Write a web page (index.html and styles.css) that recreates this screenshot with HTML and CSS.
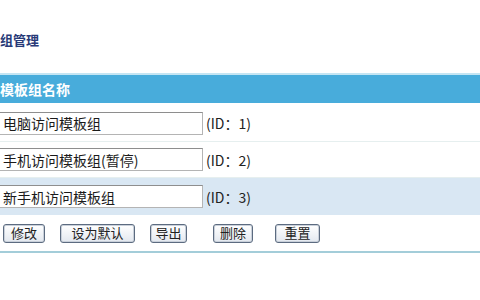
FILE: index.html
```html
<!DOCTYPE html>
<html>
<head>
<meta charset="utf-8">
<link rel="stylesheet" href="styles.css">
</head>
<body>
<div class="page">
  <div class="title">组管理</div>
  <div class="table">
    <div class="head">模板组名称</div>
    <div class="row r1">
      <input class="name" type="text" value="电脑访问模板组">
      <span class="id">(ID：1)</span>
    </div>
    <div class="row r2">
      <input class="name" type="text" value="手机访问模板组(暂停)">
      <span class="id">(ID：2)</span>
    </div>
    <div class="row r3">
      <input class="name" type="text" value="新手机访问模板组">
      <span class="id">(ID：3)</span>
    </div>
    <div class="actions">
      <button class="btn b1">修改</button>
      <button class="btn b2">设为默认</button>
      <button class="btn b3">导出</button>
      <button class="btn b4">删除</button>
      <button class="btn b5">重置</button>
    </div>
  </div>
</div>
</body>
</html>
```
FILE: styles.css
```css
html, body {
  margin: 0;
  padding: 0;
  background: #ffffff;
}
.page {
  width: 480px;
  height: 300px;
  overflow: hidden;
  font-family: "Noto Sans CJK SC", "Noto Sans", sans-serif;
  font-size: 14px;
  color: #222;
}
.title {
  padding-top: 32px;
  height: 73px;
  box-sizing: border-box;
  font-weight: bold;
  font-size: 13px;
  line-height: 16px;
  color: #283a78;
}
.head {
  border-top: 2px solid #c4e5f3;
  height: 28px;
  background: #48acdb;
  color: #ffffff;
  font-weight: bold;
  font-size: 14px;
  line-height: 28px;
}
.row {
  display: flex;
  align-items: center;
  box-sizing: border-box;
  border-bottom: 1px solid #e6efef;
}
.r1 { height: 39px; padding-top: 2px; }
.r2 { height: 36px; }
.r3 { height: 37px; background: #d9e7f3; border-bottom: none; }
.name {
  margin: 0 0 0 -2px;
  width: 205px;
  height: 23px;
  box-sizing: border-box;
  border: 1px solid #b4b4b4;
  border-top-color: #8e8e8e;
  background: #ffffff;
  padding: 0 0 0 4px;
  font-family: "Noto Sans CJK SC", "Noto Sans", sans-serif;
  font-size: 14px;
  color: #1a1a1a;
}
.id {
  margin-left: 3px;
  font-size: 14px;
  color: #222;
}
.actions {
  height: 38px;
  box-sizing: border-box;
  border-bottom: 2px solid #a3cdd9;
  display: flex;
  align-items: center;
  padding-left: 3px;
}
.btn {
  height: 19px;
  padding: 0;
  margin: 0;
  box-sizing: border-box;
  border: 1px solid #5c6b80;
  border-radius: 3px;
  box-shadow: inset 0 0 0 1px #c9d0da;
  background: linear-gradient(#ffffff, #e3e8ef);
  font-family: "Noto Sans CJK SC", "Noto Sans", sans-serif;
  font-size: 13px;
  line-height: 16px;
  color: #222;
}
.b1 { width: 42px; }
.b2 { width: 75px; margin-left: 15px; }
.b3 { width: 37px; margin-left: 15px; }
.b4 { width: 40px; margin-left: 26px; }
.b5 { width: 45px; margin-left: 22px; }
```
